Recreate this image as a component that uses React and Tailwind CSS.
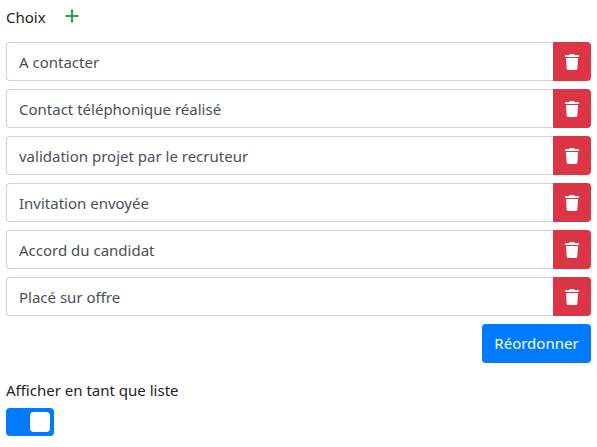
const CHOICES = [
  'A contacter',
  'Contact téléphonique réalisé',
  'validation projet par le recruteur',
  'Invitation envoyée',
  'Accord du candidat',
  'Placé sur offre',
]

function TrashIcon() {
  return (
    <svg width="14" height="16" viewBox="0 0 448 512" fill="currentColor">
      <path d="M432 32H312l-9.400-18.700A24 24 0 0 0 281.100 0H166.800a23.700 23.700 0 0 0-21.400 13.300L136 32H16A16 16 0 0 0 0 48v32a16 16 0 0 0 16 16h416a16 16 0 0 0 16-16V48a16 16 0 0 0-16-16zM53.200 467a48 48 0 0 0 47.900 45h245.800a48 48 0 0 0 47.900-45L416 128H32z" />
    </svg>
  )
}

function PlusIcon() {
  return (
    <svg width="14" height="14" viewBox="0 0 14 14" fill="none" stroke="#28a745" strokeWidth="2">
      <path d="M7 0.500v13M0.500 7h13" />
    </svg>
  )
}

export default function App() {
  return (
    <div className="w-[597px] h-[447px] bg-white overflow-hidden px-[6px] pt-[6px] text-[15px] text-[#212529] font-['Noto_Sans','Open_Sans',sans-serif]">
      <div className="flex items-center h-[22px] mb-[14px]">
        <span>Choix</span>
        <span className="ml-[19px] flex mb-[2px]"><PlusIcon /></span>
      </div>

      <div className="flex flex-col gap-2">
        {CHOICES.map((choice) => (
          <div key={choice} className="flex h-[39px]">
            <div className="flex-1 flex items-center pl-[12px] pt-[1px] border border-[#ced4da] border-r-0 rounded-l-[4px] text-[#495057]">
              {choice}
            </div>
            <button className="w-[38px] flex items-center justify-center bg-[#dc3545] text-white rounded-r-[4px]">
              <TrashIcon />
            </button>
          </div>
        ))}
      </div>

      <div className="flex justify-end mt-2">
        <button className="w-[109px] h-[39px] bg-[#007bff] text-white rounded-[4px]">Réordonner</button>
      </div>

      <div className="mt-[16px] h-[22px] flex items-center">Afficher en tant que liste</div>

      <div className="mt-[7px] w-[48px] h-[28px] bg-[#007bff] rounded-[4px] flex items-center justify-end pr-[4px]">
        <div className="w-[20px] h-[20px] bg-white rounded-[4px]" />
      </div>
    </div>
  )
}
